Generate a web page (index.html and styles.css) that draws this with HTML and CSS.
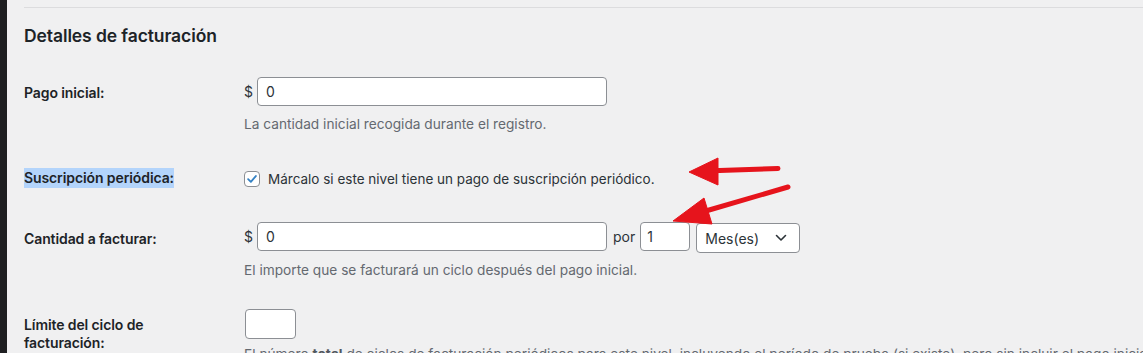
FILE: index.html
```html
<!DOCTYPE html>
<html lang="es">
<head>
<meta charset="utf-8">
<title>Detalles de facturación</title>
<link rel="stylesheet" href="styles.css">
</head>
<body>
<div class="page">
  <div class="sidebar-edge"></div>
  <main class="content">
    <section class="section">
      <h2 class="section-title">Detalles de facturación</h2>

      <div class="row row-initial">
        <div class="label">Pago inicial:</div>
        <div class="field">
          <div class="line">
            <span class="cur">$</span>
            <span class="input input-wide">0</span>
          </div>
          <p class="description">La cantidad inicial recogida durante el registro.</p>
        </div>
      </div>

      <div class="row row-recurring">
        <div class="label"><span class="selected">Suscripción periódica:</span></div>
        <div class="field">
          <label class="check-line">
            <span class="checkbox">
              <svg viewBox="0 0 16 16" width="16" height="16"><path d="M3.6 8.2 L6.7 11.2 L12.4 4.6" fill="none" stroke="#3582c4" stroke-width="2.1" stroke-linecap="round" stroke-linejoin="round"/></svg>
            </span>
            Márcalo si este nivel tiene un pago de suscripción periódico.
          </label>
        </div>
      </div>

      <div class="row row-amount">
        <div class="label">Cantidad a facturar:</div>
        <div class="field">
          <div class="line">
            <span class="cur">$</span>
            <span class="input input-wide">0</span>
            <span class="per">por</span>
            <span class="input input-small">1</span>
            <span class="select">Mes(es)
              <svg class="chev" viewBox="0 0 12 8" width="12" height="8"><path d="M1.5 1.5 L6 6 L10.5 1.5" fill="none" stroke="#2c3338" stroke-width="1.6" stroke-linecap="round" stroke-linejoin="round"/></svg>
            </span>
          </div>
          <p class="description">El importe que se facturará un ciclo después del pago inicial.</p>
        </div>
      </div>

      <div class="row row-limit">
        <div class="label">Límite del ciclo de facturación:</div>
        <div class="field">
          <span class="input input-tiny"></span>
          <p class="description desc-long">El número <strong>total</strong> de ciclos de facturación periódicos para este nivel, incluyendo el período de prueba (si existe), pero sin incluir el pago inicial.</p>
        </div>
      </div>
    </section>
  </main>

  <svg class="arrows" width="1143" height="353" viewBox="0 0 1143 353">
    <g fill="#e6141c" stroke="#e6141c" stroke-linejoin="round">
      <line x1="778" y1="168.5" x2="712" y2="170.8" stroke-width="5" stroke-linecap="round"/>
      <polygon points="689,172 718,158 718,185" stroke-width="1"/>
      <line x1="788" y1="187" x2="704" y2="211.5" stroke-width="5" stroke-linecap="round"/>
      <polygon points="673,221 704,198 712,224" stroke-width="1"/>
    </g>
  </svg>
</div>
</body>
</html>
```

FILE: styles.css
```css
* { box-sizing: border-box; }

html, body {
  margin: 0;
  padding: 0;
  background: #f0f0f1;
}

body {
  font-family: Inter, "Noto Sans", "Liberation Sans", sans-serif;
  color: #1d2327;
  font-size: 14px;
  overflow: hidden;
}

.page {
  position: relative;
  width: 1143px;
  height: 353px;
  display: flex;
  overflow: hidden;
}

.sidebar-edge {
  width: 7px;
  flex: 0 0 7px;
  background: #1e1f21;
}

.content {
  flex: 1;
  padding-left: 17px;
  padding-top: 7px;
}

.section {
  border-top: 1px solid #dcdcde;
}

.section-title {
  margin: 17px 0 0 0;
  font-size: 17.5px;
  line-height: 22px;
  font-weight: 600;
  letter-spacing: -0.1px;
}

.row {
  display: grid;
  grid-template-columns: 220px 1fr;
}

.label {
  font-weight: 600;
  font-size: 14px;
  line-height: 18px;
  letter-spacing: -0.1px;
}

.selected {
  background: #b3d4fb;
  padding: 1px 0 2px;
}

.field {
  display: flex;
  flex-direction: column;
}

.line {
  display: flex;
  align-items: center;
}

.cur {
  font-size: 14px;
  color: #2c3338;
  width: 13px;
}

.input {
  display: inline-flex;
  align-items: center;
  background: #fff;
  border: 1px solid #8c8f94;
  border-radius: 4px;
  height: 29px;
  padding: 0 8px;
  font-size: 14px;
  color: #2c3338;
}

.input-wide { width: 350px; }
.input-small { width: 50px; padding-left: 6px; }
.input-tiny { width: 51px; height: 30px; }

.per {
  margin: 0 5px 0 6px;
  color: #2c3338;
}

.select {
  display: inline-flex;
  align-items: center;
  justify-content: space-between;
  width: 104px;
  height: 30px;
  margin: 3px 0 0 6px;
  padding: 0 12px 0 8px;
  background: #fff;
  border: 1px solid #8c8f94;
  border-radius: 4px;
  font-size: 14px;
  color: #2c3338;
}

.chev { display: block; }

.description {
  margin: 9px 0 0 0;
  font-size: 13.7px;
  line-height: 18px;
  color: #646970;
}

.row-initial { margin-top: 30px; }
.row-initial .label { padding-top: 7px; }

.row-recurring { margin-top: 36px; }
.row-recurring .label { padding-top: 0; }

.check-line {
  display: flex;
  align-items: center;
  gap: 8px;
  font-size: 13.5px;
  line-height: 20px;
  color: #2c3338;
}

.checkbox {
  width: 16px;
  height: 16px;
  border: 1px solid #8c8f94;
  border-radius: 4px;
  background: #fff;
  display: inline-flex;
  align-items: center;
  justify-content: center;
}

.checkbox svg { width: 14px; height: 14px; }

.row-amount { margin-top: 31px; }
.row-amount .label { padding-top: 10px; }
.row-amount .description { margin-top: 8px; }

.row-limit { margin-top: 30px; }
.row-limit .label { padding-top: 7px; width: 150px; }
.row-limit .input-tiny { margin-left: 1px; }
.desc-long { margin-top: 6px; white-space: nowrap; }
.desc-long strong { font-weight: 700; color: #50575e; }

.arrows {
  position: absolute;
  left: 0;
  top: 0;
  pointer-events: none;
}
```
